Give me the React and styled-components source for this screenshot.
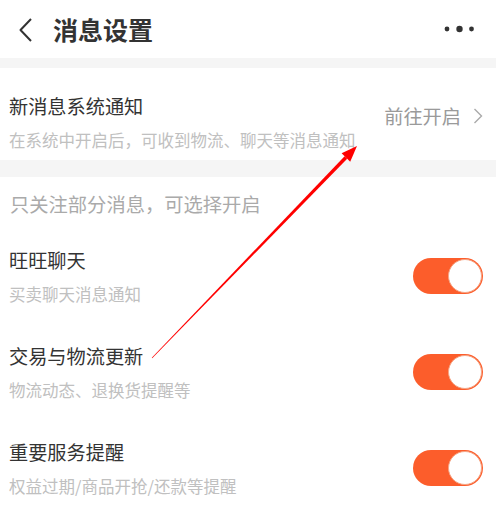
import React from 'react'
import styled, { createGlobalStyle } from 'styled-components'

const GlobalStyle = createGlobalStyle`
body {
    margin: 0;
    background: #ffffff;
    font-family: "Noto Sans CJK SC", "Noto Sans", sans-serif;
}
`;

const settings = [
    { title: '旺旺聊天', desc: '买卖聊天消息通知' },
    { title: '交易与物流更新', desc: '物流动态、退换货提醒等' },
    { title: '重要服务提醒', desc: '权益过期/商品开抢/还款等提醒' },
]

const Toggle = ({ on }) => (
    <Switch $on={on}>
        <Knob />
    </Switch>
)

const App = () => {
    return (
        <Page>
            <GlobalStyle />
            {/* header */}
            <Header>
                <BackIcon viewBox="0 0 16 24">
                    <path d="M13 1 L2.5 12 L13 23" fill="none" stroke="#333" strokeWidth="2" strokeLinejoin="round" />
                </BackIcon>
                <Title>消息设置</Title>
                <MoreIcon viewBox="0 0 32 10">
                    <circle cx="3" cy="5" r="2.4" fill="#333" />
                    <circle cx="15.5" cy="5" r="3.2" fill="#333" />
                    <circle cx="27.5" cy="5" r="2.4" fill="#333" />
                </MoreIcon>
            </Header>
            <Band $h={10} />

            {/* system notification */}
            <SystemRow>
                <TextCol>
                    <ItemTitle>新消息系统通知</ItemTitle>
                    <ItemDesc>在系统中开启后，可收到物流、聊天等消息通知</ItemDesc>
                </TextCol>
                <GoLink>
                    前往开启
                    <ChevronIcon viewBox="0 0 10 16">
                        <path d="M1.5 1 L8.5 8 L1.5 15" fill="none" stroke="#aaa" strokeWidth="1.4" />
                    </ChevronIcon>
                </GoLink>
            </SystemRow>
            <Band $h={17} />

            {/* partial settings */}
            <SectionHeader>只关注部分消息，可选择开启</SectionHeader>
            {settings.map((s) => (
                <SettingRow key={s.title}>
                    <TextCol>
                        <ItemTitle>{s.title}</ItemTitle>
                        <ItemDesc>{s.desc}</ItemDesc>
                    </TextCol>
                    <Toggle on />
                </SettingRow>
            ))}

            {/* annotation arrow */}
            <ArrowOverlay viewBox="0 0 496 516">
                <polygon points="151.8,357.7 152.2,358.3 347.2,158.8 344.6,156.2" fill="#ff0000" />
                <polygon points="357,146 350.2,161.7 341.6,153.3" fill="#ff0000" />
            </ArrowOverlay>
        </Page>
    )
}

export default App

const Page = styled.div`
position: relative;
width: 496px;
height: 516px;
overflow: hidden;
background: #fff;
`;
const Header = styled.div`
display: flex;
align-items: center;
height: 58px;
padding: 0 20px 0 18px;
box-sizing: border-box;
`;
const BackIcon = styled.svg`
width: 16px;
height: 24px;
margin-top: 2px;
`;
const Title = styled.div`
margin-left: 19px;
font-size: 25px;
font-weight: bold;
color: #333;
line-height: 30px;
flex: 1;
`;
const MoreIcon = styled.svg`
width: 32px;
height: 10px;
`;
const Band = styled.div`
height: ${(p) => p.$h}px;
background: #f5f5f5;
`;
const SystemRow = styled.div`
display: flex;
align-items: center;
padding: 25px 13px 9px 9px;
`;
const TextCol = styled.div`
display: flex;
flex-direction: column;
gap: 10px;
flex: 1;
`;
const ItemTitle = styled.div`
font-size: 19.2px;
line-height: 26px;
color: #333;
`;
const ItemDesc = styled.div`
font-size: 16.5px;
line-height: 22px;
color: #c0c0c0;
`;
const GoLink = styled.div`
display: flex;
align-items: center;
gap: 12px;
font-size: 19.2px;
line-height: 26px;
color: #9a9a9a;
margin-bottom: 12px;
`;
const ChevronIcon = styled.svg`
width: 10px;
height: 16px;
`;
const SectionHeader = styled.div`
padding: 14px 10px 0;
font-size: 19.3px;
line-height: 26px;
color: #aaa;
`;
const SettingRow = styled.div`
display: flex;
align-items: center;
padding: 30px 13px 8px 9px;
`;
const Switch = styled.div`
width: 70px;
height: 36px;
border-radius: 18px;
background: ${(p) => (p.$on ? '#fc5d2b' : '#e5e5e5')};
display: flex;
align-items: center;
justify-content: ${(p) => (p.$on ? 'flex-end' : 'flex-start')};
box-sizing: border-box;
padding: 1px;
`;
const Knob = styled.div`
width: 34px;
height: 34px;
border-radius: 50%;
background: #fff;
box-sizing: border-box;
border: 1px solid #f5a585;
`;
const ArrowOverlay = styled.svg`
position: absolute;
left: 0;
top: 0;
width: 496px;
height: 516px;
pointer-events: none;
`;
